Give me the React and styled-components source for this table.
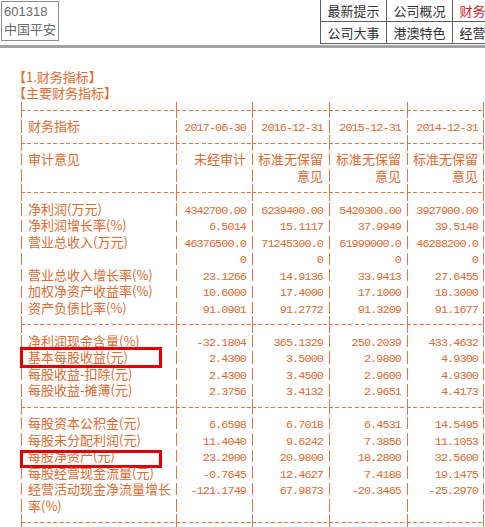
import React from 'react';
import styled, { createGlobalStyle } from 'styled-components';

const ORANGE = '#e06a30';
const LINE = '#e27540';
const ROW = 16.5;

const vBar = `repeating-linear-gradient(to bottom, transparent 0 2px, ${LINE} 2px 14.5px, transparent 14.5px ${ROW}px)`;
const vSolid = `linear-gradient(${LINE}, ${LINE})`;
const hDash = `repeating-linear-gradient(to right, ${LINE} 0 4px, transparent 4px 6.5px)`;

const GlobalStyle = createGlobalStyle`
	html, body {
		margin: 0;
		padding: 0;
		background: #fff;
		overflow: hidden;
	}
	body {
		font-family: "Noto Sans CJK SC", "Liberation Sans", sans-serif;
	}
`;

const Page = styled.div`
	width: 485px;
	height: 527px;
	overflow: hidden;
`;

const Top = styled.header`
	display: flex;
	align-items: flex-start;
	height: 45px;
	border-bottom: 3px solid #a3a3a3;
	overflow: hidden;
`;

const Ticker = styled.div`
	box-sizing: border-box;
	margin: 1px 0 0 1px;
	width: 63px;
	height: 40px;
	border: 1px solid #8c8c8c;
	padding: 1px 2px;
	font-family: "Liberation Sans", "Noto Sans CJK SC", sans-serif;
	font-size: 13px;
	line-height: 18px;
	color: #6a6a6a;
	white-space: nowrap;
`;

const Tabs = styled.nav`
	flex-shrink: 0;
	margin: -1px 0 0 261px;
	display: grid;
	grid-template-columns: repeat(4, 65px);
	grid-template-rows: 21px 21px;
	gap: 1px;
	background: #5e5e5e;
	border: 1px solid #5e5e5e;
`;

const Tab = styled.div`
	background: #fff;
	display: flex;
	align-items: center;
	justify-content: center;
	font-size: 13px;
	color: ${(p) => (p.$active ? '#e01818' : '#333')};
	white-space: nowrap;
	overflow: hidden;
`;

const Titles = styled.div`
	margin: 20.75px 0 0 13px;
	color: ${ORANGE};
	font-size: 13px;
	line-height: ${ROW}px;
`;

const Sheet = styled.div`
	margin-left: 21px;
	display: grid;
	grid-template-columns: 155px 76px 77px 78px 77px;
	color: ${ORANGE};
	font-size: 13px;
	line-height: ${ROW}px;
`;

const RuleCell = styled.div`
	height: ${ROW}px;
	background-image: ${hDash}, ${vSolid}${(p) => (p.$last ? `, ${vSolid}` : '')};
	background-size: 100% 1px, 1px 100%${(p) => (p.$last ? ', 1px 100%' : '')};
	background-position: left 8px, left top${(p) => (p.$last ? ', right top' : '')};
	background-repeat: no-repeat;
`;

const Cell = styled.div`
	padding: ${(p) => (p.$label ? '0 4px 0 7px' : '0 6px 0 3px')};
	text-align: ${(p) => (p.$label ? 'left' : 'right')};
	white-space: nowrap;
	background-image: ${vBar}${(p) => (p.$last ? `, ${vBar}` : '')};
	background-size: 1px 100%${(p) => (p.$last ? ', 1px 100%' : '')};
	background-position: left top${(p) => (p.$last ? ', right top' : '')};
	background-repeat: no-repeat;
`;

const Line = styled.div`
	position: relative;
	height: ${ROW}px;

	${(p) =>
		p.$mark &&
		`
		&::after {
			content: '';
			position: absolute;
			left: -8px;
			top: ${p.$mark === 'tall' ? -2 : 1.5}px;
			width: 142px;
			height: ${p.$mark === 'tall' ? 21 : 18}px;
			box-sizing: border-box;
			border: 3px solid #e30000;
		}
	`}
`;

const Num = styled.span`
	font-family: "Liberation Mono", "DejaVu Sans Mono", monospace;
	font-size: 11.8px;
	letter-spacing: -0.9px;
`;

const blocks = [
	{
		labels: ['财务指标'],
		cols: [['2017-06-30'], ['2016-12-31'], ['2015-12-31'], ['2014-12-31']],
	},
	{
		labels: ['审计意见', ''],
		cols: [['未经审计', ''], ['标准无保留', '意见'], ['标准无保留', '意见'], ['标准无保留', '意见']],
	},
	{
		labels: ['净利润(万元)', '净利润增长率(%)', '营业总收入(万元)', '', '营业总收入增长率(%)', '加权净资产收益率(%)', '资产负债比率(%)'],
		cols: [
			['4342700.00', '6.5014', '46376500.0', '0', '23.1266', '10.6000', '91.0901'],
			['6239400.00', '15.1117', '71245300.0', '0', '14.9136', '17.4000', '91.2772'],
			['5420300.00', '37.9949', '61999000.0', '0', '33.9413', '17.1000', '91.3209'],
			['3927900.00', '39.5148', '46288200.0', '0', '27.6455', '18.3000', '91.1677'],
		],
	},
	{
		labels: ['净利润现金含量(%)', '基本每股收益(元)', '每股收益-扣除(元)', '每股收益-摊薄(元)'],
		marks: { 1: 'tall' },
		cols: [
			['-32.1804', '2.4300', '2.4300', '2.3756'],
			['365.1329', '3.5000', '3.4500', '3.4132'],
			['250.2039', '2.9800', '2.9600', '2.9651'],
			['433.4632', '4.9300', '4.9300', '4.4173'],
		],
	},
	{
		labels: ['每股资本公积金(元)', '每股未分配利润(元)', '每股净资产(元)', '每股经营现金流量(元)', '经营活动现金净流量增长', '率(%)'],
		marks: { 2: 'short' },
		cols: [
			['6.6598', '11.4040', '23.2900', '-0.7645', '-121.1749', ''],
			['6.7018', '9.6242', '20.9800', '12.4627', '67.9873', ''],
			['6.4531', '7.3856', '18.2800', '7.4188', '-20.3465', ''],
			['14.5495', '11.1053', '32.5600', '19.1475', '-25.2970', ''],
		],
	},
];

const isNum = (v) => /^[-0-9.]+$/.test(v);

function Rule({ id }) {
	return [0, 1, 2, 3, 4].map((i) => <RuleCell key={`${id}-${i}`} $last={i === 4} />);
}

export default function App() {
	return (
		<Page>
			<GlobalStyle />
			<Top>
				<Ticker>
					601318
					<br />
					中国平安
				</Ticker>
				<Tabs>
					<Tab>最新提示</Tab>
					<Tab>公司概况</Tab>
					<Tab $active>财务分析</Tab>
					<Tab>股东股本</Tab>
					<Tab>公司大事</Tab>
					<Tab>港澳特色</Tab>
					<Tab>经营分析</Tab>
					<Tab>主力追踪</Tab>
				</Tabs>
			</Top>

			<Titles>
				<div>【1.财务指标】</div>
				<div>【主要财务指标】</div>
			</Titles>

			<Sheet>
				<Rule id="r0" />
				{blocks.map((block, b) => (
					<React.Fragment key={b}>
						<Cell $label>
							{block.labels.map((label, i) => (
								<Line key={i} $mark={block.marks && block.marks[i]}>
									{label}
								</Line>
							))}
						</Cell>
						{block.cols.map((col, c) => (
							<Cell key={c} $last={c === 3}>
								{col.map((v, i) => (
									<Line key={i}>{isNum(v) ? <Num>{v}</Num> : v}</Line>
								))}
							</Cell>
						))}
						<Rule id={`r${b + 1}`} />
					</React.Fragment>
				))}
			</Sheet>
		</Page>
	);
}
